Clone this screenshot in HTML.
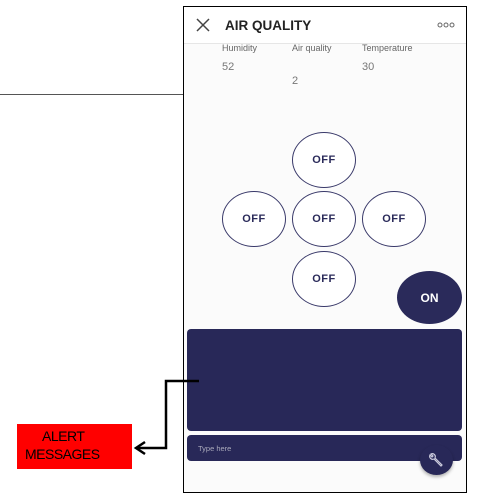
<!DOCTYPE html>
<html><head><style>
body{margin:0;width:496px;height:493px;background:#fff;position:relative;overflow:hidden;font-family:"Liberation Sans",sans-serif}
.a{position:absolute}
.c{position:absolute;width:62px;height:54px;border:1px solid #3a3a6a;border-radius:50%;background:#fff;display:flex;align-items:center;justify-content:center;font-weight:bold;font-size:11px;color:#2a2a5a;letter-spacing:.5px}
.l{font-size:9px;color:#666}
.v{font-size:11px;color:#777}
</style></head><body>
<div class="a" style="left:0;top:94px;width:184px;height:1px;background:#555"></div>
<div class="a" style="left:183px;top:6px;width:282px;height:485px;border:1px solid #000;background:#fbfbfb"></div>
<div class="a" style="left:184px;top:7px;width:282px;height:36px;background:#fff;border-bottom:1px solid #e6e6e6"></div>
<svg class="a" style="left:196px;top:18px" width="14" height="14"><path d="M1 1L13 13M13 1L1 13" stroke="#444" stroke-width="1.5"/></svg>
<div class="a" style="left:225px;top:18px;font-weight:bold;font-size:13.5px;color:#222">AIR QUALITY</div>
<svg class="a" style="left:437px;top:21px" width="18" height="8"><g fill="none" stroke="#666" stroke-width="1"><circle cx="3" cy="4" r="2"/><circle cx="9" cy="4" r="2"/><circle cx="15" cy="4" r="2"/></g></svg>
<div class="a l" style="left:222px;top:43px">Humidity</div>
<div class="a l" style="left:292px;top:43px">Air quality</div>
<div class="a l" style="left:362px;top:43px">Temperature</div>
<div class="a v" style="left:222px;top:61px">52</div>
<div class="a v" style="left:292px;top:75px">2</div>
<div class="a v" style="left:362px;top:61px">30</div>
<div class="c" style="left:292px;top:132px">OFF</div>
<div class="c" style="left:222px;top:191px">OFF</div>
<div class="c" style="left:292px;top:191px">OFF</div>
<div class="c" style="left:362px;top:191px">OFF</div>
<div class="c" style="left:292px;top:251px">OFF</div>
<div class="a" style="left:397px;top:271px;width:65px;height:53px;border-radius:50%;background:#2a2a5a;color:#fff;font-weight:bold;font-size:12px;display:flex;align-items:center;justify-content:center">ON</div>
<div class="a" style="left:187px;top:329px;width:275px;height:102px;border-radius:4px;background:#282858"></div>
<div class="a" style="left:187px;top:435px;width:275px;height:26px;border-radius:4px;background:#282858"></div>
<div class="a" style="left:198px;top:444px;font-size:7.5px;color:#aab">Type here</div>
<div class="a" style="left:420px;top:445px;width:33px;height:30px;border-radius:50%;background:#282858;box-shadow:0 2px 3px rgba(0,0,0,.3)"></div>
<svg class="a" style="left:428px;top:452px" width="16" height="16"><path d="M2 3a3 3 0 0 0 4 4l7 7 1-1-7-7a3 3 0 0 0-4-4l2 2-1 1z" fill="none" stroke="#ccd" stroke-width="1.2"/></svg>
<div class="a" style="left:17px;top:424px;width:115px;height:45px;background:#f00"></div>
<div class="a" style="left:42px;top:428px;font-size:14px;color:#000;letter-spacing:-.5px">ALERT</div>
<div class="a" style="left:25px;top:446px;font-size:14px;color:#000;letter-spacing:-.5px">MESSAGES</div>
<svg class="a" style="left:0;top:0" width="496" height="493"><path d="M199 381H166V448H136" fill="none" stroke="#000" stroke-width="2.5"/><path d="M145 442L136 448L145 454" fill="none" stroke="#000" stroke-width="2.5"/></svg>
</body></html>
